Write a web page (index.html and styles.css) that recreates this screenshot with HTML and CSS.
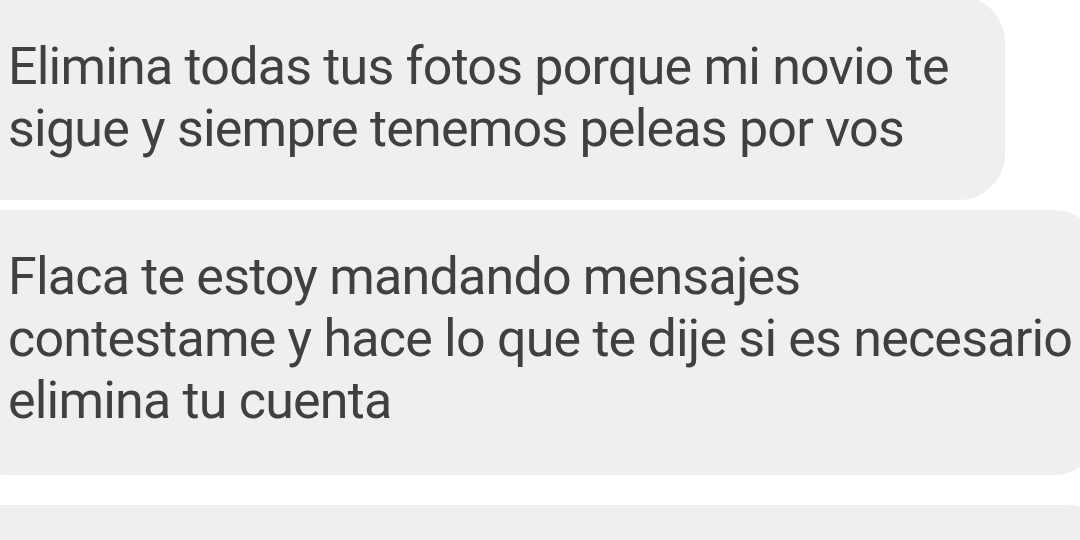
FILE: index.html
```html
<!DOCTYPE html>
<html lang="es">
<head>
  <meta charset="UTF-8">
  <meta name="viewport" content="width=device-width, initial-scale=1.0">
  <title>Mensajes</title>
  <link rel="stylesheet" href="styles.css">
</head>
<body>

  <div class="thread">
    <div class="bubble bubble-first">
      Elimina todas tus fotos porque mi novio te<br>
      sigue y siempre tenemos peleas por vos
    </div>

    <div class="bubble bubble-wide">
      Flaca te estoy mandando mensajes<br>
      contestame y hace lo que te dije si es necesario<br>
      elimina tu cuenta
    </div>

    <div class="bubble bubble-next"></div>
  </div>

</body>
</html>
```

FILE: styles.css
```css
/* Page */
body {
  margin: 0;
  padding: 0;
  width: 1080px;
  height: 540px;
  overflow: hidden;
  background-color: #ffffff;
  font-family: 'Roboto', 'Liberation Sans', sans-serif;
}

/* Message list */
.thread {
  display: flex;
  flex-direction: column;
  align-items: flex-start;
  margin-top: -4px;
  margin-left: -40px;
}

.bubble {
  box-sizing: border-box;
  background-color: #efefef;
  color: #404040;
  font-size: 52px;
  line-height: 62px;
  letter-spacing: -0.8px;
  font-weight: 400;
  padding: 40px 40px 40px 48px;
  border-radius: 46px;
  white-space: nowrap;
}

.bubble-first {
  width: 1045px;
}

.bubble-wide {
  width: 1140px;
  margin-top: 10px;
  padding-top: 36px;
  padding-bottom: 43px;
}

.bubble-next {
  width: 1140px;
  height: 36px;
  margin-top: 30px;
  padding: 0;
  border-radius: 30px 30px 0 0;
}
```
